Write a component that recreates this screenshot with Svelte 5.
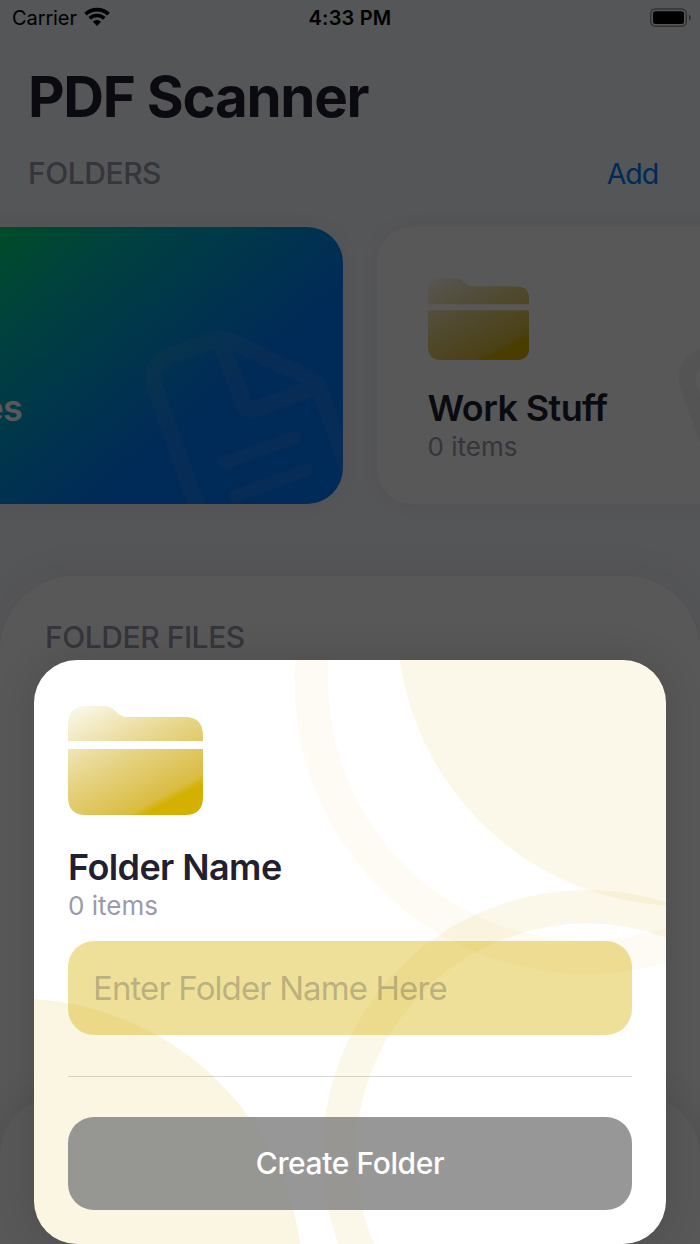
<script>
  let folders = [
    { name: 'All Files', count: 3, active: true },
    { name: 'Work Stuff', count: 0, active: false }
  ];
  let folderName = '';
</script>

{#snippet folderIcon(id)}
  <svg class="folder-icon" viewBox="0 0 135 109">
    <defs>
      <linearGradient {id} gradientUnits="userSpaceOnUse" x1="0" y1="0" x2="62.5" y2="117.5">
        <stop offset="0" stop-color="#fcfaf0" />
        <stop offset="0.5" stop-color="#e7d68c" />
        <stop offset="0.93" stop-color="#dabc42" />
        <stop offset="0.99" stop-color="#d4b000" />
      </linearGradient>
    </defs>
    <path fill="url(#{id})" d="M0 35V19C0 6 6 0 18 0H36C47 0 49 11 59 11H117C129 11 135 17 135 30V35Z" />
    <path fill="url(#{id})" d="M0 43H135V91C135 103 129 109 117 109H18C6 109 0 103 0 91Z" />
  </svg>
{/snippet}

<div class="phone">
  <div class="status">
    <div class="carrier">
      <span>Carrier</span>
      <svg width="26" height="20" viewBox="0 0 26 20" fill="none" stroke="#000" stroke-width="3.7">
        <path d="M1.5 7.1A16.8 16.8 0 0 1 24.5 7.1" />
        <path d="M5.7 11.4A10.6 10.6 0 0 1 20.3 11.4" />
        <path d="M13 19L8.9 14.7A5.8 5.8 0 0 1 17.1 14.7Z" fill="#000" stroke="none" />
      </svg>
    </div>
    <span class="time">4:33 PM</span>
    <div class="power">
      <svg width="42" height="20" viewBox="0 0 42 20">
        <rect x="0.7" y="0.9" width="35.6" height="17.4" rx="4.8" fill="none" stroke="#000" stroke-opacity="0.4" stroke-width="1.5" />
        <rect x="3" y="3.2" width="31" height="12.8" rx="2.5" />
        <path d="M39 6.5C41.3 7.5 41.3 11.7 39 12.7Z" fill-opacity="0.5" />
      </svg>
    </div>
  </div>

  <h1>PDF Scanner</h1>

  <div class="row">
    <span class="label">FOLDERS</span>
    <span class="add">Add</span>
  </div>

  <div class="folders">
    {#each folders as folder, i}
      <div class="card" class:active={folder.active}>
        <svg class="doc" viewBox="0 0 200 180">
          <g fill="none" stroke-width="16.5" stroke-linejoin="round">
            <path d="M55 172L11 48Q4 27 23 17L67 1Q77 -3 87 1L165 38Q173 42 176 51L228 194" />
            <path d="M78 6L100 64Q103 73 112 69L172 47" />
            <path stroke-width="13" stroke-linecap="round" d="M80 123L150 97.5M92 156L162 130" />
          </g>
        </svg>
        {@render folderIcon('folder' + i)}
        <div class="name">{folder.name}</div>
        <div class="count">{folder.count} items</div>
      </div>
    {/each}
  </div>

  <div class="files">
    <span class="label">FOLDER FILES</span>
  </div>
  <div class="toolbar"></div>

  <div class="overlay"></div>

  <div class="modal">
    <svg class="bubbles" viewBox="34 659.5 632 584.5" fill="none">
      <circle cx="682.7" cy="619.9" r="285.6" fill="#deb40a" fill-opacity="0.09" />
      <circle cx="17.3" cy="1284" r="285.8" fill="#d4b90a" fill-opacity="0.12" />
      <circle cx="587" cy="681" r="275.7" stroke="#deb40a" stroke-opacity="0.05" stroke-width="33.5" />
      <circle cx="587" cy="1154" r="247.7" stroke="#deb40a" stroke-opacity="0.09" stroke-width="33.5" />
    </svg>
    <div class="content">
      {@render folderIcon('newFolder')}
      <div class="name">Folder Name</div>
      <div class="count">0 items</div>
      <input placeholder="Enter Folder Name Here" bind:value={folderName} />
      <hr />
      <button disabled={!folderName}>Create Folder</button>
    </div>
  </div>
</div>

<style>
  :global(body) {
    background: #f6f7fb;
  }

  .phone {
    position: relative;
    width: 700px;
    height: 1244px;
    overflow: hidden;
    display: flex;
    flex-direction: column;
    background: #f6f8fc;
    color: #211f30;
    font-family: Inter, "Liberation Sans", sans-serif;
  }

  .phone > * {
    flex-shrink: 0;
  }

  .status {
    display: grid;
    grid-template-columns: 1fr auto 1fr;
    align-items: center;
    height: 36px;
    padding: 0 9px 0 12px;
    box-sizing: border-box;
    color: #000;
    font-size: 20px;
  }

  .carrier {
    display: flex;
    align-items: center;
    gap: 7px;
    letter-spacing: -0.1px;
  }

  .carrier svg {
    margin-top: -2px;
  }

  .time {
    margin-right: 3px;
    font-weight: 600;
    letter-spacing: 0.2px;
  }

  .power {
    display: flex;
    justify-content: flex-end;
    margin: -1px -1px 0 0;
  }

  h1 {
    margin: 25px 0 0 28px;
    font-size: 56.5px;
    line-height: 72px;
    font-weight: 700;
    letter-spacing: -1.3px;
  }

  .row {
    display: flex;
    justify-content: space-between;
    align-items: center;
    height: 40px;
    padding: 0 42px 0 28px;
    margin-top: 20px;
  }

  .label {
    color: #9a9aab;
    font-size: 30px;
    font-weight: 500;
    letter-spacing: -0.45px;
  }

  .add {
    color: #007aff;
    font-size: 28.5px;
    letter-spacing: -1.1px;
  }

  .folders {
    display: flex;
    gap: 33.5px;
    margin: 34px 0 0 -157px;
  }

  .card {
    position: relative;
    flex: none;
    width: 500px;
    height: 277px;
    padding: 50.5px 51px 0;
    box-sizing: border-box;
    border-radius: 36px;
    overflow: hidden;
    background: #fff;
    box-shadow: 0 0 20px rgba(60, 50, 60, 0.06);
  }

  .card.active {
    background: linear-gradient(140deg, #00f050 0%, #00da7a 20%, #00bcb4 35%, #0097e0 54%, #007aff 70%);
    color: #fff;
  }

  /* page watermark, runs off the bottom right corner of the card */
  .doc {
    position: absolute;
    left: 301px;
    top: 113px;
    width: 200px;
    height: 180px;
    overflow: visible;
    stroke: #8e8e93;
    opacity: 0.1;
  }

  .active .doc {
    stroke: #c8b4be;
    opacity: 0.11;
  }

  .folder-icon {
    display: block;
    width: 135px;
    height: 109px;
  }

  .card .folder-icon {
    width: 101.5px;
    height: 82px;
  }

  .name {
    font-size: 36px;
    line-height: 44px;
    font-weight: 600;
    letter-spacing: -0.6px;
  }

  .active .name {
    letter-spacing: -0.8px;
  }

  .count {
    color: #9a9aab;
    font-size: 26px;
    line-height: 34px;
  }

  .card .name {
    margin-top: 26px;
  }

  .files {
    height: 600px;
    margin-top: 71.5px;
    padding: 41.5px 45px;
    box-sizing: border-box;
    border-radius: 75px 75px 0 0;
    background: #fff;
    box-shadow: 0 0 40px rgba(60, 50, 60, 0.08);
  }

  .files .label {
    line-height: 40px;
  }

  .toolbar {
    height: 200px;
    margin-top: -80px;
    border-radius: 60px 60px 0 0;
    background: #fff;
    box-shadow: 0 0 40px rgba(0, 0, 0, 0.13);
  }

  .overlay {
    position: absolute;
    inset: 0;
    background: rgba(0, 0, 0, 0.655);
  }

  .modal {
    position: absolute;
    left: 34px;
    bottom: 0;
    width: 632px;
    height: 584.5px;
    border-radius: 43px;
    overflow: hidden;
    background: #fff;
    box-shadow: 0 0 40px rgba(0, 0, 0, 0.12);
  }

  .bubbles {
    position: absolute;
    inset: 0;
    width: 100%;
    height: 100%;
  }

  .content {
    position: relative;
    display: flex;
    flex-direction: column;
    padding: 46.5px 34px 0;
  }

  .content .name {
    margin-top: 30px;
  }

  input {
    height: 94px;
    margin: 18px 0 0;
    padding: 0 25px;
    border: 0;
    border-radius: 26px;
    background: rgba(212, 176, 0, 0.4);
    font: 400 33px Inter, sans-serif;
    letter-spacing: -0.9px;
  }

  input::placeholder {
    color: rgba(60, 60, 67, 0.3);
    opacity: 1;
  }

  hr {
    width: 100%;
    height: 1px;
    margin: 41px 0 40px;
    border: 0;
    background: rgba(60, 60, 67, 0.2);
  }

  button {
    height: 93px;
    padding: 0 0 2px;
    border: 0;
    border-radius: 26px;
    background: rgba(128, 128, 128, 0.82);
    color: #fff;
    font: 500 30px Inter, sans-serif;
    letter-spacing: -0.4px;
  }
</style>
